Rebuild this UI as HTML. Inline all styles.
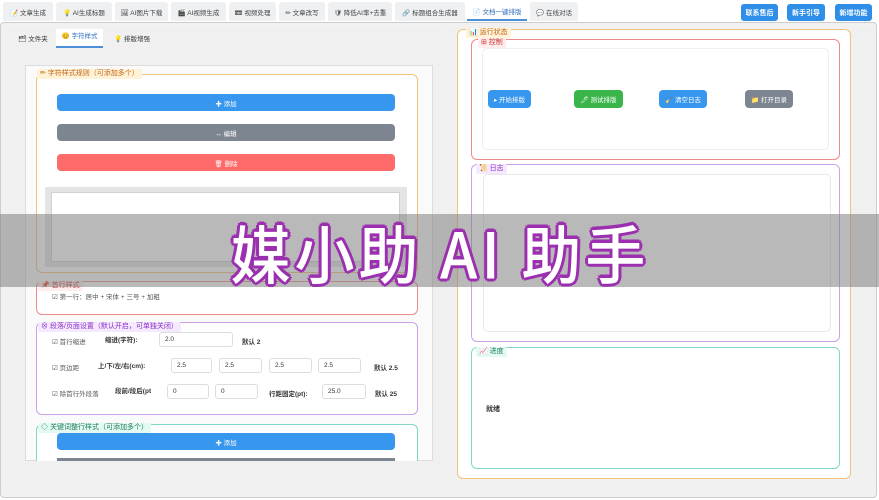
<!DOCTYPE html><html><head><meta charset="utf-8"><style>
*{box-sizing:border-box;margin:0;padding:0}
body{width:879px;height:500px;overflow:hidden;background:#fff;font-family:"Liberation Sans","Noto Sans CJK SC",sans-serif;font-size:7px;color:#333;position:relative}
.a{position:absolute}
.tab{position:absolute;top:2px;height:19px;background:#eef0f2;border-radius:3px 3px 0 0;font-size:6.5px;color:#444;display:flex;align-items:center;justify-content:center}
.tb{position:absolute;top:4px;height:17px;background:#2f8ee8;color:#fff;border-radius:3px;font-size:7px;font-weight:bold;display:flex;align-items:center;justify-content:center}
.fs{position:absolute;border-radius:6px;background:#fff}
.lg{position:absolute;font-size:7px;padding:0 3px;height:10px;line-height:10px;border-radius:2px}
.btn{position:absolute;border-radius:4px;color:#fff;font-size:6.5px;display:flex;align-items:center;justify-content:center}
.inp{position:absolute;height:15px;border:1px solid #ddd;border-radius:3px;font-size:6.5px;padding-left:5px;line-height:13px;background:#fff}
</style></head><body>
<div class="a" style="left:0;top:22px;width:877px;height:476px;background:#f1f1f1;border:1px solid #ccc;border-radius:4px"></div>
<div class="tab" style="left:3px;width:50px">📝 文章生成</div>
<div class="tab" style="left:56px;width:56px">💡 AI生成标题</div>
<div class="tab" style="left:115px;width:53px">🖼 AI图片下载</div>
<div class="tab" style="left:171px;width:55px">🎬 AI视频生成</div>
<div class="tab" style="left:229px;width:47px">📼 视频处理</div>
<div class="tab" style="left:279px;width:46px">✏ 文章改写</div>
<div class="tab" style="left:328px;width:64px">🛡 降低AI率+去重</div>
<div class="tab" style="left:395px;width:70px">🔗 标题组合生成器</div>
<div class="tab" style="left:467px;width:60px;background:#fff;border-bottom:2px solid #4a8fd8;color:#2f6fc0">📄 文档一键排版</div>
<div class="tab" style="left:530px;width:48px">💬 在线对话</div>
<div class="tb" style="left:741px;width:37px">联系售后</div>
<div class="tb" style="left:787px;width:38px">新手引导</div>
<div class="tb" style="left:835px;width:37px">新增功能</div>

<div class="a" style="left:8px;top:28px;width:432px;height:442px;background:#f0f0f0"></div>
<div class="a" style="left:14px;top:32px;width:38px;height:16px;font-size:6.5px;line-height:16px;text-align:center">🗂 文件夹</div>
<div class="a" style="left:56px;top:29px;width:47px;height:19px;background:#fff;border-bottom:2px solid #4a8fd8;font-size:6.5px;line-height:15px;text-align:center;color:#2f6fc0">😊 字符样式</div>
<div class="a" style="left:110px;top:32px;width:44px;height:16px;font-size:6.5px;line-height:16px;text-align:center">💡 排版增强</div>
<div class="a" style="left:25px;top:65px;width:408px;height:396px;background:#fafafa;border:1px solid #ddd"></div>

<div class="fs" style="left:36px;top:74px;width:382px;height:199px;border:1px solid #f2c27a"></div>
<div class="lg" style="left:37px;top:69px;background:#fff2d6;color:#c0661a">✏ 字符样式规则（可添加多个）</div>
<div class="btn" style="left:57px;top:94px;width:338px;height:17px;background:#3797ee">✚ 添加</div>
<div class="btn" style="left:57px;top:124px;width:338px;height:17px;background:#7c8590">↔ 编辑</div>
<div class="btn" style="left:57px;top:154px;width:338px;height:17px;background:#ff6b6b">🗑 删除</div>
<div class="a" style="left:45px;top:187px;width:362px;height:80px;background:#e4e4e4"></div>
<div class="a" style="left:51px;top:192px;width:349px;height:70px;background:#fff;border:1px solid #d0d0d0"></div>

<div class="fs" style="left:36px;top:281px;width:382px;height:34px;border:1px solid #ef8a8a"></div>
<div class="lg" style="left:38px;top:281px;color:#c43434;background:#ffecec">📌 首行样式</div>
<div class="a" style="left:52px;top:291px;font-size:6.5px;color:#555">☑ 第一行：居中 + 宋体 + 三号 + 加粗</div>

<div class="fs" style="left:36px;top:322px;width:382px;height:93px;border:1px solid #c9a2ea"></div>
<div class="lg" style="left:38px;top:322px;color:#8b2fc9;background:#f4e9ff">⊗ 段落/页面设置（默认开启，可单独关闭）</div>
<div class="a" style="left:52px;top:336px;font-size:6.5px;color:#555">☑ 首行缩进</div>
<div class="a" style="left:105px;top:334px;font-size:6.5px;font-weight:bold">缩进(字符):</div>
<div class="inp" style="left:159px;top:332px;width:74px">2.0</div>
<div class="a" style="left:242px;top:336px;font-size:6.5px;font-weight:bold">默认 2</div>
<div class="a" style="left:52px;top:362px;font-size:6.5px;color:#555">☑ 页边距</div>
<div class="a" style="left:98px;top:360px;font-size:6.5px;font-weight:bold">上/下/左/右(cm):</div>
<div class="inp" style="left:171px;top:358px;width:41px">2.5</div>
<div class="inp" style="left:219px;top:358px;width:43px">2.5</div>
<div class="inp" style="left:269px;top:358px;width:43px">2.5</div>
<div class="inp" style="left:318px;top:358px;width:43px">2.5</div>
<div class="a" style="left:374px;top:362px;font-size:6.5px;font-weight:bold">默认 2.5</div>
<div class="a" style="left:52px;top:388px;font-size:6.5px;color:#555">☑ 除首行外段落</div>
<div class="a" style="left:115px;top:385px;font-size:6.5px;font-weight:bold">段前/段后(pt</div>
<div class="inp" style="left:167px;top:384px;width:42px">0</div>
<div class="inp" style="left:215px;top:384px;width:43px">0</div>
<div class="a" style="left:269px;top:388px;font-size:6.5px;font-weight:bold">行距固定(pt):</div>
<div class="inp" style="left:322px;top:384px;width:44px">25.0</div>
<div class="a" style="left:375px;top:388px;font-size:6.5px;font-weight:bold">默认 25</div>

<div class="fs" style="left:36px;top:424px;width:382px;height:37px;border:1px solid #7fd8c6;border-bottom:none;border-radius:6px 6px 0 0"></div>
<div class="lg" style="left:38px;top:423px;color:#1f7a5e;background:#e2faf2">◇ 关键词整行样式（可添加多个）</div>
<div class="btn" style="left:57px;top:433px;width:338px;height:17px;background:#3797ee">✚ 添加</div>
<div class="a" style="left:57px;top:458px;width:338px;height:3px;background:#7c8590"></div>

<div class="a" style="left:447px;top:28px;width:428px;height:442px;background:#f0f0f0"></div>
<div class="fs" style="left:457px;top:29px;width:394px;height:450px;border:1px solid #f2c27a"></div>
<div class="lg" style="left:466px;top:28px;color:#c0661a;background:#fff2d6">📊 运行状态</div>
<div class="fs" style="left:471px;top:39px;width:369px;height:121px;border:1px solid #ef8a8a"></div>
<div class="lg" style="left:478px;top:38px;color:#c43434;background:#ffecec">⊞ 控制</div>
<div class="a" style="left:482px;top:48px;width:347px;height:102px;border:1px solid #eee;border-radius:5px"></div>
<div class="btn" style="left:488px;top:90px;width:43px;height:18px;background:#3797ee">▸ 开始排版</div>
<div class="btn" style="left:574px;top:90px;width:49px;height:18px;background:#3ab54a">🖊 测试排版</div>
<div class="btn" style="left:659px;top:90px;width:48px;height:18px;background:#3797ee">🧹 清空日志</div>
<div class="btn" style="left:745px;top:90px;width:48px;height:18px;background:#7c8590">📁 打开目录</div>
<div class="fs" style="left:471px;top:164px;width:369px;height:178px;border:1px solid #c9a2ea"></div>
<div class="lg" style="left:476px;top:164px;color:#8b2fc9;background:#f4e9ff">📜 日志</div>
<div class="a" style="left:483px;top:174px;width:348px;height:158px;border:1px solid #e8e8e8;border-radius:5px"></div>
<div class="fs" style="left:471px;top:347px;width:369px;height:122px;border:1px solid #7fd8c6"></div>
<div class="lg" style="left:476px;top:347px;color:#1f7a5e;background:#e2faf2">📈 进度</div>
<div class="a" style="left:486px;top:404px;font-size:7px;font-weight:bold;color:#333">就绪</div>

<div class="a" style="left:0;top:214px;width:879px;height:73px;background:rgba(128,128,128,0.55)"></div>
<div class="a" style="left:190px;top:212px;width:500px;text-align:center;font-size:60px;line-height:80px;font-weight:500;color:#fff;text-shadow:3px 0 #9b2fb0,-3px 0 #9b2fb0,0 3px #9b2fb0,0 -3px #9b2fb0,2px 2px #9b2fb0,-2px -2px #9b2fb0,2px -2px #9b2fb0,-2px 2px #9b2fb0;font-family:'Noto Sans CJK SC','Liberation Sans',sans-serif;letter-spacing:4px;transform:scaleY(1.05)">媒小助 AI 助手</div>
</body></html>
